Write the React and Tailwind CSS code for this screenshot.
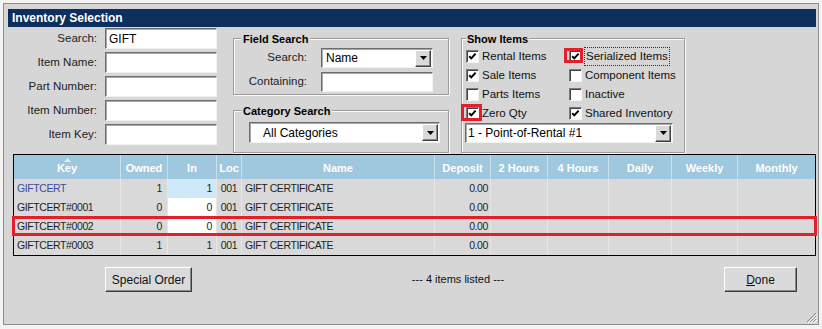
import React from "react";

const sunken =
  "bg-white border border-t-[#6d6d6d] border-l-[#6d6d6d] border-b-[#f2f2f2] border-r-[#f2f2f2] shadow-[inset_1px_1px_0_#a8a8a8]";
const raised =
  "bg-[#dadada] border border-t-white border-l-white border-b-[#3c3c3c] border-r-[#3c3c3c] shadow-[inset_-1px_-1px_0_#8a8a8a]";
const etched =
  "border border-[#9c9c9c] shadow-[inset_1px_1px_0_#fafafa,1px_1px_0_#fafafa]";

function Input({ value, w, h = "h-[21px]" }) {
  return (
    <div className={`${sunken} ${w} ${h} flex items-center pl-[3px] text-[12px] text-black`}>
      {value}
    </div>
  );
}

function Arrow() {
  return (
    <div className={`${raised} w-[16px] h-[17px] mr-[1px] flex items-center justify-center`}>
      <svg width="7" height="4" viewBox="0 0 7 4">
        <path d="M0 0h7L3.5 4z" fill="#000" />
      </svg>
    </div>
  );
}

function Select({ value, w, h = "h-[21px]", pl = "pl-[4px]" }) {
  return (
    <div className={`${sunken} ${w} ${h} flex items-center text-[12px] text-black`}>
      <span className={`flex-1 ${pl}`}>{value}</span>
      <Arrow />
    </div>
  );
}

function Check({ checked, red, redPos }) {
  return (
    <div className="relative w-[13px] h-[13px] shrink-0">
      <div className="w-[13px] h-[13px] bg-white border border-t-[#7a7a7a] border-l-[#7a7a7a] border-b-[#f4f4f4] border-r-[#f4f4f4] shadow-[inset_1px_1px_0_#444]">
        {checked && (
          <svg width="11" height="11" viewBox="0 0 11 11" className="block">
            <path d="M2.2 5.2 L4.3 7.4 L8.6 2.6" stroke="#000" strokeWidth="2" fill="none" />
          </svg>
        )}
      </div>
      {red && <div className={`absolute ${redPos} border-[3px] border-[#e21f2b]`} />}
    </div>
  );
}

function CheckRow({ checked, label, red, redPos, focus }) {
  return (
    <div className="h-[19px] flex items-center">
      <Check checked={checked} red={red} redPos={redPos} />
      <span
        className={`ml-[3px] text-[11.5px] text-[#111] ${
          focus ? "outline outline-1 outline-dotted outline-[#333] px-[1px] -ml-[0px]" : ""
        }`}
      >
        {label}
      </span>
    </div>
  );
}

const cols = [
  { name: "Key", w: "w-[107px]" },
  { name: "Owned", w: "w-[47px]" },
  { name: "In", w: "w-[49px]" },
  { name: "Loc", w: "w-[25px]" },
  { name: "Name", w: "w-[193px]" },
  { name: "Deposit", w: "w-[56px]" },
  { name: "2 Hours", w: "w-[57px]" },
  { name: "4 Hours", w: "w-[61px]" },
  { name: "Daily", w: "w-[63px]" },
  { name: "Weekly", w: "w-[66px]" },
  { name: "Monthly", w: "w-[77px]" },
];

const rows = [
  { key: "GIFTCERT", owned: "1", inn: "1", inBg: "bg-[#cfe9f9]", blue: true },
  { key: "GIFTCERT#0001", owned: "0", inn: "0", inBg: "bg-white" },
  { key: "GIFTCERT#0002", owned: "0", inn: "0", inBg: "bg-white", red: true },
  { key: "GIFTCERT#0003", owned: "1", inn: "1", inBg: "" },
];

function Row({ r }) {
  const cell = "h-[19px] flex items-center border-r border-[#e6e6e6] shrink-0";
  return (
    <div className="relative flex h-[19px] text-[10.5px] tracking-[-0.4px] text-[#1e1e1e]">
      <div className={`${cell} w-[107px] pl-[3px] ${r.blue ? "text-[#3a4d9a]" : ""}`}>{r.key}</div>
      <div className={`${cell} w-[47px] justify-end pr-[5px]`}>{r.owned}</div>
      <div className={`${cell} w-[49px] justify-end pr-[4px] ${r.inBg}`}>{r.inn}</div>
      <div className={`${cell} w-[25px] justify-center`}>001</div>
      <div className={`${cell} w-[193px] pl-[3px]`}>GIFT CERTIFICATE</div>
      <div className={`${cell} w-[56px] justify-end pr-[2px]`}>0.00</div>
      <div className={`${cell} w-[57px]`} />
      <div className={`${cell} w-[61px]`} />
      <div className={`${cell} w-[63px]`} />
      <div className={`${cell} w-[66px]`} />
      <div className={`${cell} w-[77px] border-r-0`} />
      {r.red && (
        <div className="absolute -top-[1px] bottom-0 -left-[2px] -right-[2px] border-[3px] border-[#e21f2b]" />
      )}
    </div>
  );
}

export default function App() {
  return (
    <div className="w-[822px] h-[329px] bg-[#f3f3f3] pt-[3px] pl-[3px] font-['Liberation_Sans',Arial,sans-serif] overflow-hidden">
      <div className="w-[816px] h-[322px] border border-[#8c8c8c] bg-[#d6d6d6] pl-[4px] pt-[5px] flex flex-col">
        {/* Title */}
        <div className="w-[808px] h-[18px] bg-[#0c2f5e] text-white font-bold text-[12px] pl-[4px] flex items-center">
          Inventory Selection
        </div>

        {/* Top section */}
        <div className="flex mt-[1px]">
          {/* Left fields */}
          <div className="flex flex-col gap-[3px]">
            {[
              ["Search:", "GIFT"],
              ["Item Name:", ""],
              ["Part Number:", ""],
              ["Item Number:", ""],
              ["Item Key:", ""],
            ].map(([l, v]) => (
              <div key={l} className="flex items-center">
                <div className="w-[89px] text-right text-[11.5px] text-[#222]">{l}</div>
                <div className="ml-[8px]">
                  <Input value={v} w="w-[112px]" />
                </div>
              </div>
            ))}
          </div>

          {/* Middle groups */}
          <div className="ml-[16px] mt-[10px] w-[216px] flex flex-col gap-[15px]">
            <div className={`relative h-[57px] ${etched} pt-[9px] flex flex-col gap-[4px]`}>
              <span className="absolute -top-[8px] left-[7px] bg-[#d6d6d6] px-[2px] font-bold text-[11px] text-black">
                Field Search
              </span>
              <div className="flex items-center">
                <div className="w-[73px] text-right text-[11.5px] text-[#222]">Search:</div>
                <div className="ml-[14px]">
                  <Select value="Name" w="w-[112px]" h="h-[20px]" />
                </div>
              </div>
              <div className="flex items-center">
                <div className="w-[73px] text-right text-[11.5px] text-[#222]">Containing:</div>
                <div className="ml-[14px]">
                  <Input value="" w="w-[112px]" h="h-[20px]" />
                </div>
              </div>
            </div>
            <div className={`relative h-[43px] ${etched} pt-[11px] pl-[15px]`}>
              <span className="absolute -top-[8px] left-[7px] bg-[#d6d6d6] px-[2px] font-bold text-[11px] text-black">
                Category Search
              </span>
              <Select value="All Categories" w="w-[191px]" h="h-[21px]" pl="pl-[13px]" />
            </div>
          </div>

          {/* Show items */}
          <div className={`relative ml-[12px] mt-[10px] w-[224px] h-[115px] ${etched} pl-[4px] pt-[8px]`}>
            <span className="absolute -top-[8px] left-[4px] bg-[#d6d6d6] px-[1px] font-bold text-[11px] text-black">
              Show Items
            </span>
            <div className="flex">
              <div className="w-[103px] flex flex-col">
                <CheckRow checked label="Rental Items" />
                <CheckRow checked label="Sale Items" />
                <CheckRow label="Parts Items" />
                <CheckRow checked label="Zero Qty" red redPos="-left-[5px] -top-[3px] w-[21px] h-[17px]" />
              </div>
              <div className="flex flex-col">
                <CheckRow checked label="Serialized Items" focus red redPos="-left-[5px] -top-[2px] w-[19px] h-[15px]" />
                <CheckRow label="Component Items" />
                <CheckRow label="Inactive" />
                <CheckRow checked label="Shared Inventory" />
              </div>
            </div>
            <div className="-ml-[1px]">
              <Select value="1 - Point-of-Rental #1" w="w-[208px]" h="h-[20px]" pl="pl-[2px]" />
            </div>
          </div>
        </div>

        {/* Table */}
        <div className="mt-[1px] ml-[5px] w-[803px] border border-black bg-[#d9d9d9]">
          <div className="flex h-[24px] bg-[#9fc7de]">
            {cols.map((c, i) => (
              <div
                key={c.name}
                className={`${c.w} shrink-0 relative flex items-center justify-center pt-[2px] text-white font-bold text-[11px] ${
                  i < cols.length - 1 ? "border-r border-[#c9dfeb]" : ""
                }`}
              >
                {i === 0 && (
                  <svg width="7" height="4" viewBox="0 0 7 4" className="absolute top-[3px] left-[50px]">
                    <path d="M3.5 0L7 4H0z" fill="#dfeef6" />
                  </svg>
                )}
                {c.name}
              </div>
            ))}
          </div>
          {rows.map((r) => (
            <Row key={r.key} r={r} />
          ))}
        </div>

        {/* Bottom */}
        <div className="flex items-center mt-[11px] mr-[21px]">
          <button className={`${raised} ml-[97px] w-[87px] h-[25px] text-[12px] text-[#111]`}>Special Order</button>
          <div className="flex-1 text-center text-[11px] text-[#111]">--- 4 items listed ---</div>
          <button className={`${raised} w-[73px] h-[25px] text-[12px] text-[#111]`}>
            <span className="underline">D</span>one
          </button>
        </div>
        <div className="mt-auto flex justify-end pr-[1px] pb-[1px]">
          <svg width="11" height="11" viewBox="0 0 11 11">
            <path d="M10 1L1 10M10 4L4 10M10 7L7 10" stroke="#888" strokeWidth="1" />
            <path d="M11 2L2 11M11 5L5 11M11 8L8 11" stroke="#fff" strokeWidth="1" />
          </svg>
        </div>
      </div>
    </div>
  );
}
